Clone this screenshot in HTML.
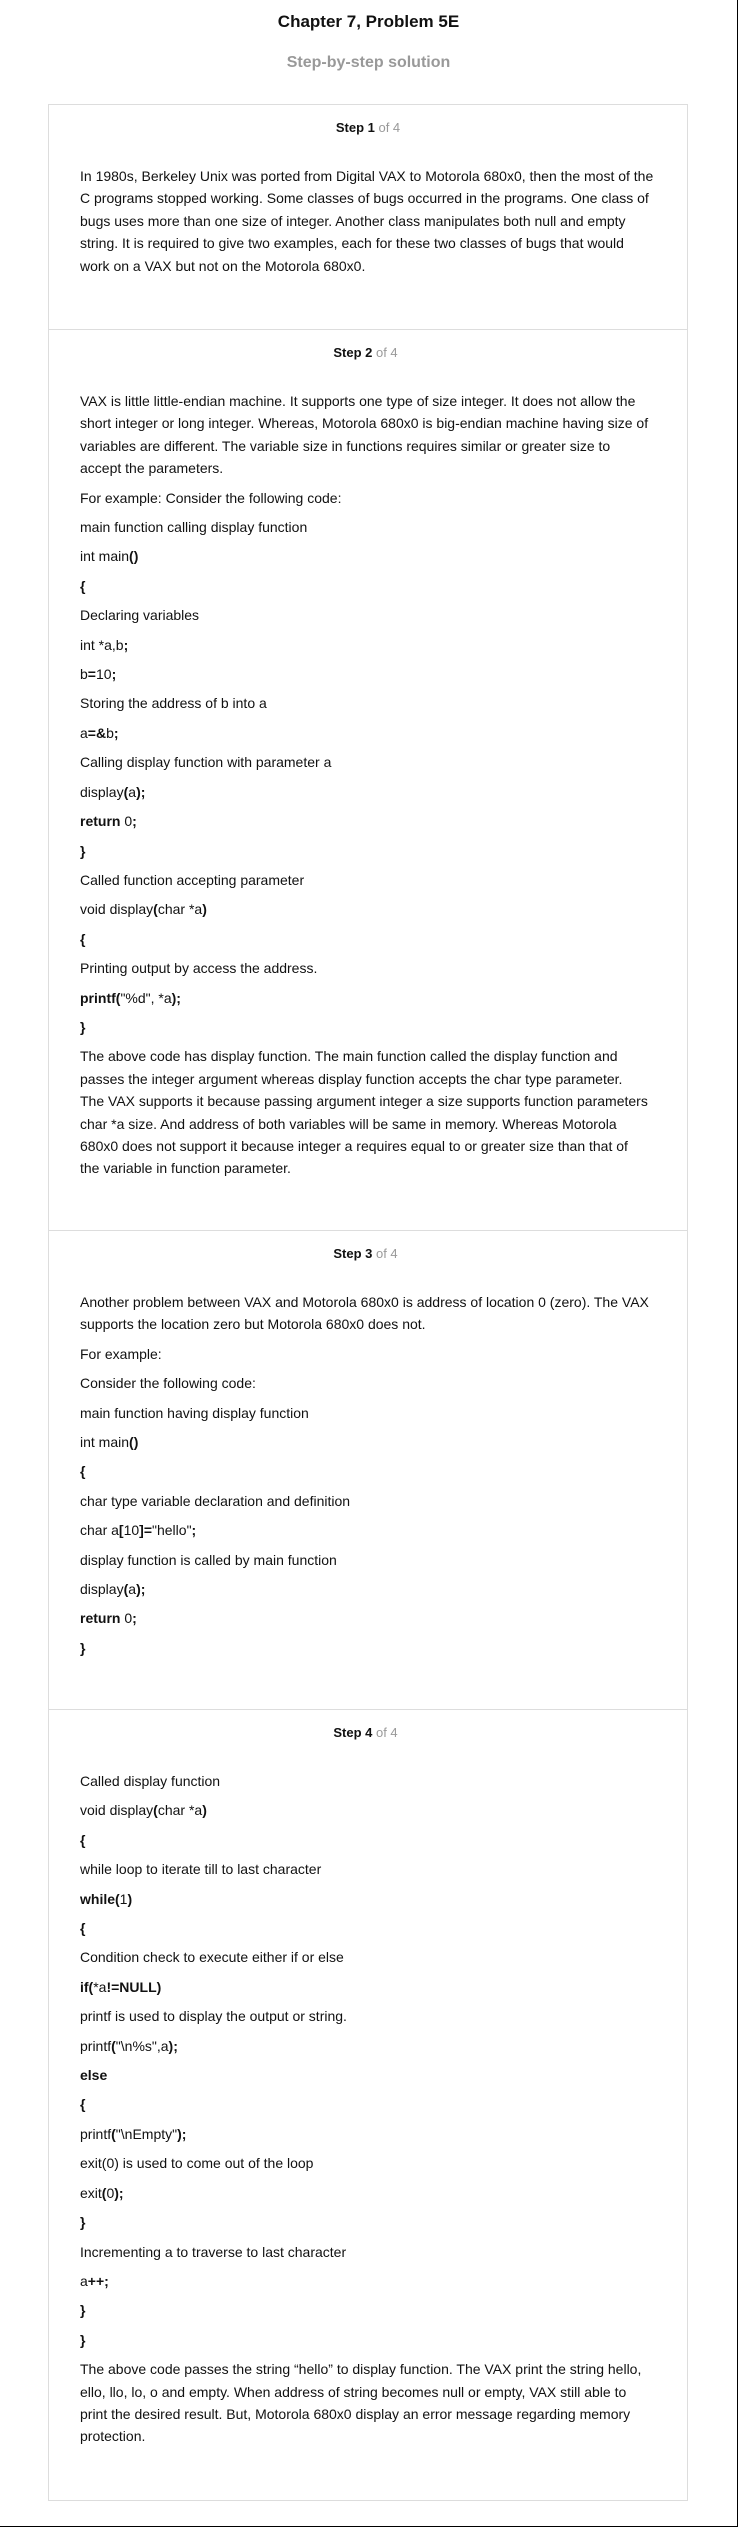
<!DOCTYPE html>
<html><head><meta charset="utf-8"><style>
html,body{margin:0;padding:0;background:#fff}
body{width:737px;height:2526px;border-right:1px solid #000;border-bottom:1px solid #000;font-family:"Liberation Sans",Arial,sans-serif;color:#111;position:relative;overflow:hidden}
h1{margin:0;position:absolute;top:11px;left:0;width:737px;text-align:center;font-size:17px;line-height:22px;font-weight:bold;color:#111}
h2{margin:0;position:absolute;top:52px;left:0;width:737px;text-align:center;font-size:16px;line-height:22px;font-weight:bold;color:#999}
.box{position:absolute;top:104px;left:48px;width:638px;border:1px solid #ddd}
.sec{padding:14px 36px 45px 31px;border-top:1px solid #ddd;box-sizing:border-box}
.sec:first-child{border-top:none;padding-right:31px}
.hd{text-align:center;font-size:13px;line-height:18px;font-weight:bold;margin-bottom:28px}
.hd span{font-weight:normal;color:#999}
p{margin:0 0 7px 0;font-size:14px;line-height:22.4px}
b{font-weight:bold}
</style></head><body>
<h1>Chapter 7, Problem 5E</h1>
<h2>Step-by-step solution</h2>
<div class="box">
<div class="sec" style="height:224px">
<div class="hd">Step 1 <span>of 4</span></div>
<p>In 1980s, Berkeley Unix was ported from Digital VAX to Motorola 680x0, then the most of the C programs stopped working. Some classes of bugs occurred in the programs. One class of bugs uses more than one size of integer. Another class manipulates both null and empty string. It is required to give two examples, each for these two classes of bugs that would work on a VAX but not on the Motorola 680x0.</p>
</div>
<div class="sec" style="height:901px">
<div class="hd">Step 2 <span>of 4</span></div>
<p>VAX is little little-endian machine. It supports one type of size integer. It does not allow the short integer or long integer. Whereas, Motorola 680x0 is big-endian machine having size of variables are different. The variable size in functions requires similar or greater size to accept the parameters.</p>
<p>For example: Consider the following code:</p>
<p>main function calling display function</p>
<p>int main<b>()</b></p>
<p><b>{</b></p>
<p>Declaring variables</p>
<p>int *a,b<b>;</b></p>
<p>b<b>=</b>10<b>;</b></p>
<p>Storing the address of b into a</p>
<p>a<b>=&amp;</b>b<b>;</b></p>
<p>Calling display function with parameter a</p>
<p>display<b>(</b>a<b>);</b></p>
<p><b>return</b> 0<b>;</b></p>
<p><b>}</b></p>
<p>Called function accepting parameter</p>
<p>void display<b>(</b>char *a<b>)</b></p>
<p><b>{</b></p>
<p>Printing output by access the address.</p>
<p><b>printf(</b>"%d", *a<b>);</b></p>
<p><b>}</b></p>
<p>The above code has display function. The main function called the display function and passes the integer argument whereas display function accepts the char type parameter.<br>The VAX supports it because passing argument integer a size supports function parameters<br>char *a size. And address of both variables will be same in memory. Whereas Motorola 680x0 does not support it because integer a requires equal to or greater size than that of the variable in function parameter.</p>
</div>
<div class="sec" style="height:479px">
<div class="hd">Step 3 <span>of 4</span></div>
<p>Another problem between VAX and Motorola 680x0 is address of location 0 (zero). The VAX supports the location zero but Motorola 680x0 does not.</p>
<p>For example:</p>
<p>Consider the following code:</p>
<p>main function having display function</p>
<p>int main<b>()</b></p>
<p><b>{</b></p>
<p>char type variable declaration and definition</p>
<p>char a<b>[</b>10<b>]=</b>"hello"<b>;</b></p>
<p>display function is called by main function</p>
<p>display<b>(</b>a<b>);</b></p>
<p><b>return</b> 0<b>;</b></p>
<p><b>}</b></p>
</div>
<div class="sec" style="height:791px">
<div class="hd">Step 4 <span>of 4</span></div>
<p>Called display function</p>
<p>void display<b>(</b>char *a<b>)</b></p>
<p><b>{</b></p>
<p>while loop to iterate till to last character</p>
<p><b>while(</b>1<b>)</b></p>
<p><b>{</b></p>
<p>Condition check to execute either if or else</p>
<p><b>if(</b>*a<b>!=NULL)</b></p>
<p>printf is used to display the output or string.</p>
<p>printf<b>(</b>"\n%s",a<b>);</b></p>
<p><b>else</b></p>
<p><b>{</b></p>
<p>printf<b>(</b>"\nEmpty"<b>);</b></p>
<p>exit(0) is used to come out of the loop</p>
<p>exit<b>(</b>0<b>);</b></p>
<p><b>}</b></p>
<p>Incrementing a to traverse to last character</p>
<p>a<b>++;</b></p>
<p><b>}</b></p>
<p><b>}</b></p>
<p>The above code passes the string “hello” to display function. The VAX print the string hello, ello, llo, lo, o and empty. When address of string becomes null or empty, VAX still able to print the desired result. But, Motorola 680x0 display an error message regarding memory protection.</p>
</div>
</div>
</body></html>
